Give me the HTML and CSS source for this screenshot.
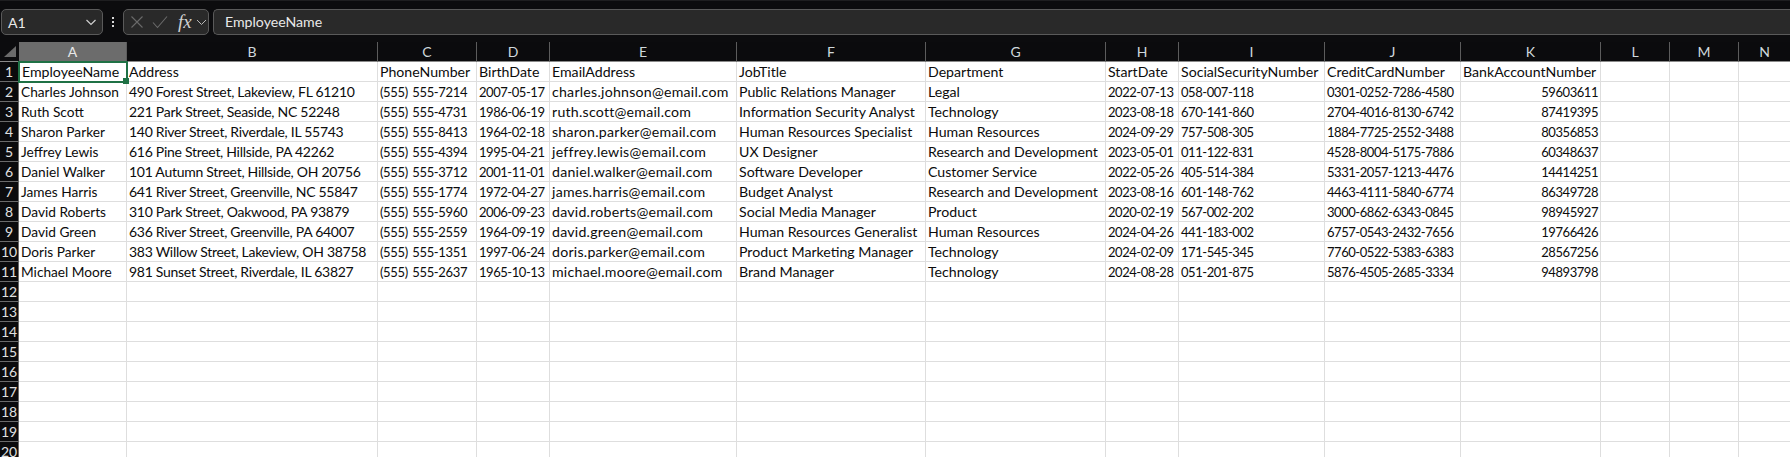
FILE: index.html
```html
<!DOCTYPE html>
<html lang="en">
<head>
<meta charset="utf-8">
<title>Employees</title>
<link rel="stylesheet" href="styles.css">
</head>
<body>
<div class="formula-bar">
  <div class="name-box"><span>A1</span>
    <svg class="chev" width="12" height="12" viewBox="0 0 12 12"><path d="M1.5 4 L6 8.5 L10.5 4" fill="none" stroke="#d0d0d0" stroke-width="1.2"/></svg>
  </div>
  <svg class="dots" width="4" height="12" viewBox="0 0 4 12"><rect x="1" y="1" width="2" height="2" fill="#d8d8d8"/><rect x="1" y="5" width="2" height="2" fill="#d8d8d8"/><rect x="1" y="9" width="2" height="2" fill="#d8d8d8"/></svg>
  <div class="fx-box">
    <svg width="14" height="14" viewBox="0 0 14 14"><path d="M1.5 1.5 L12.5 12.5 M12.5 1.5 L1.5 12.5" stroke="#6a6a6a" stroke-width="1.1" fill="none"/></svg>
    <svg class="check" width="16" height="14" viewBox="0 0 16 14"><path d="M1 7.5 L5.5 12.5 L15 1.5" stroke="#6a6a6a" stroke-width="1.1" fill="none"/></svg>
    <span class="fx">fx</span>
    <svg width="11" height="10" viewBox="0 0 11 10"><path d="M1 3 L5.5 7.5 L10 3" fill="none" stroke="#b8b8b8" stroke-width="1"/></svg>
  </div>
  <div class="formula-input">EmployeeName</div>
</div>
<div class="sheet">
  <div class="corner"><svg width="12" height="11" viewBox="0 0 12 11"><path d="M12 0 V11 H0 Z" fill="#6b6b6b"/></svg></div>
  <div class="ch sel">A</div><div class="ch">B</div><div class="ch">C</div><div class="ch">D</div><div class="ch">E</div><div class="ch">F</div><div class="ch">G</div><div class="ch">H</div><div class="ch">I</div><div class="ch">J</div><div class="ch">K</div><div class="ch">L</div><div class="ch">M</div><div class="ch">N</div>

  <div class="rh">1</div><div class="c active">EmployeeName<i class="handle"></i></div><div class="c">Address</div><div class="c">PhoneNumber</div><div class="c">BirthDate</div><div class="c">EmailAddress</div><div class="c">JobTitle</div><div class="c">Department</div><div class="c">StartDate</div><div class="c">SocialSecurityNumber</div><div class="c">CreditCardNumber</div><div class="c">BankAccountNumber</div><div class="c"></div><div class="c"></div><div class="c"></div>

  <div class="rh">2</div><div class="c">Charles Johnson</div><div class="c">490 Forest Street, Lakeview, FL 61210</div><div class="c">(555) 555-7214</div><div class="c">2007-05-17</div><div class="c">charles.johnson@email.com</div><div class="c">Public Relations Manager</div><div class="c">Legal</div><div class="c">2022-07-13</div><div class="c">058-007-118</div><div class="c">0301-0252-7286-4580</div><div class="c num">59603611</div><div class="c"></div><div class="c"></div><div class="c"></div>

  <div class="rh">3</div><div class="c">Ruth Scott</div><div class="c">221 Park Street, Seaside, NC 52248</div><div class="c">(555) 555-4731</div><div class="c">1986-06-19</div><div class="c">ruth.scott@email.com</div><div class="c">Information Security Analyst</div><div class="c">Technology</div><div class="c">2023-08-18</div><div class="c">670-141-860</div><div class="c">2704-4016-8130-6742</div><div class="c num">87419395</div><div class="c"></div><div class="c"></div><div class="c"></div>

  <div class="rh">4</div><div class="c">Sharon Parker</div><div class="c">140 River Street, Riverdale, IL 55743</div><div class="c">(555) 555-8413</div><div class="c">1964-02-18</div><div class="c">sharon.parker@email.com</div><div class="c">Human Resources Specialist</div><div class="c">Human Resources</div><div class="c">2024-09-29</div><div class="c">757-508-305</div><div class="c">1884-7725-2552-3488</div><div class="c num">80356853</div><div class="c"></div><div class="c"></div><div class="c"></div>

  <div class="rh">5</div><div class="c">Jeffrey Lewis</div><div class="c">616 Pine Street, Hillside, PA 42262</div><div class="c">(555) 555-4394</div><div class="c">1995-04-21</div><div class="c">jeffrey.lewis@email.com</div><div class="c">UX Designer</div><div class="c">Research and Development</div><div class="c">2023-05-01</div><div class="c">011-122-831</div><div class="c">4528-8004-5175-7886</div><div class="c num">60348637</div><div class="c"></div><div class="c"></div><div class="c"></div>

  <div class="rh">6</div><div class="c">Daniel Walker</div><div class="c">101 Autumn Street, Hillside, OH 20756</div><div class="c">(555) 555-3712</div><div class="c">2001-11-01</div><div class="c">daniel.walker@email.com</div><div class="c">Software Developer</div><div class="c">Customer Service</div><div class="c">2022-05-26</div><div class="c">405-514-384</div><div class="c">5331-2057-1213-4476</div><div class="c num">14414251</div><div class="c"></div><div class="c"></div><div class="c"></div>

  <div class="rh">7</div><div class="c">James Harris</div><div class="c">641 River Street, Greenville, NC 55847</div><div class="c">(555) 555-1774</div><div class="c">1972-04-27</div><div class="c">james.harris@email.com</div><div class="c">Budget Analyst</div><div class="c">Research and Development</div><div class="c">2023-08-16</div><div class="c">601-148-762</div><div class="c">4463-4111-5840-6774</div><div class="c num">86349728</div><div class="c"></div><div class="c"></div><div class="c"></div>

  <div class="rh">8</div><div class="c">David Roberts</div><div class="c">310 Park Street, Oakwood, PA 93879</div><div class="c">(555) 555-5960</div><div class="c">2006-09-23</div><div class="c">david.roberts@email.com</div><div class="c">Social Media Manager</div><div class="c">Product</div><div class="c">2020-02-19</div><div class="c">567-002-202</div><div class="c">3000-6862-6343-0845</div><div class="c num">98945927</div><div class="c"></div><div class="c"></div><div class="c"></div>

  <div class="rh">9</div><div class="c">David Green</div><div class="c">636 River Street, Greenville, PA 64007</div><div class="c">(555) 555-2559</div><div class="c">1964-09-19</div><div class="c">david.green@email.com</div><div class="c">Human Resources Generalist</div><div class="c">Human Resources</div><div class="c">2024-04-26</div><div class="c">441-183-002</div><div class="c">6757-0543-2432-7656</div><div class="c num">19766426</div><div class="c"></div><div class="c"></div><div class="c"></div>

  <div class="rh">10</div><div class="c">Doris Parker</div><div class="c">383 Willow Street, Lakeview, OH 38758</div><div class="c">(555) 555-1351</div><div class="c">1997-06-24</div><div class="c">doris.parker@email.com</div><div class="c">Product Marketing Manager</div><div class="c">Technology</div><div class="c">2024-02-09</div><div class="c">171-545-345</div><div class="c">7760-0522-5383-6383</div><div class="c num">28567256</div><div class="c"></div><div class="c"></div><div class="c"></div>

  <div class="rh">11</div><div class="c">Michael Moore</div><div class="c">981 Sunset Street, Riverdale, IL 63827</div><div class="c">(555) 555-2637</div><div class="c">1965-10-13</div><div class="c">michael.moore@email.com</div><div class="c">Brand Manager</div><div class="c">Technology</div><div class="c">2024-08-28</div><div class="c">051-201-875</div><div class="c">5876-4505-2685-3334</div><div class="c num">94893798</div><div class="c"></div><div class="c"></div><div class="c"></div>

  <div class="rh">12</div><div class="c"></div><div class="c"></div><div class="c"></div><div class="c"></div><div class="c"></div><div class="c"></div><div class="c"></div><div class="c"></div><div class="c"></div><div class="c"></div><div class="c"></div><div class="c"></div><div class="c"></div><div class="c"></div>
  <div class="rh">13</div><div class="c"></div><div class="c"></div><div class="c"></div><div class="c"></div><div class="c"></div><div class="c"></div><div class="c"></div><div class="c"></div><div class="c"></div><div class="c"></div><div class="c"></div><div class="c"></div><div class="c"></div><div class="c"></div>
  <div class="rh">14</div><div class="c"></div><div class="c"></div><div class="c"></div><div class="c"></div><div class="c"></div><div class="c"></div><div class="c"></div><div class="c"></div><div class="c"></div><div class="c"></div><div class="c"></div><div class="c"></div><div class="c"></div><div class="c"></div>
  <div class="rh">15</div><div class="c"></div><div class="c"></div><div class="c"></div><div class="c"></div><div class="c"></div><div class="c"></div><div class="c"></div><div class="c"></div><div class="c"></div><div class="c"></div><div class="c"></div><div class="c"></div><div class="c"></div><div class="c"></div>
  <div class="rh">16</div><div class="c"></div><div class="c"></div><div class="c"></div><div class="c"></div><div class="c"></div><div class="c"></div><div class="c"></div><div class="c"></div><div class="c"></div><div class="c"></div><div class="c"></div><div class="c"></div><div class="c"></div><div class="c"></div>
  <div class="rh">17</div><div class="c"></div><div class="c"></div><div class="c"></div><div class="c"></div><div class="c"></div><div class="c"></div><div class="c"></div><div class="c"></div><div class="c"></div><div class="c"></div><div class="c"></div><div class="c"></div><div class="c"></div><div class="c"></div>
  <div class="rh">18</div><div class="c"></div><div class="c"></div><div class="c"></div><div class="c"></div><div class="c"></div><div class="c"></div><div class="c"></div><div class="c"></div><div class="c"></div><div class="c"></div><div class="c"></div><div class="c"></div><div class="c"></div><div class="c"></div>
  <div class="rh">19</div><div class="c"></div><div class="c"></div><div class="c"></div><div class="c"></div><div class="c"></div><div class="c"></div><div class="c"></div><div class="c"></div><div class="c"></div><div class="c"></div><div class="c"></div><div class="c"></div><div class="c"></div><div class="c"></div>
  <div class="rh">20</div><div class="c"></div><div class="c"></div><div class="c"></div><div class="c"></div><div class="c"></div><div class="c"></div><div class="c"></div><div class="c"></div><div class="c"></div><div class="c"></div><div class="c"></div><div class="c"></div><div class="c"></div><div class="c"></div>
</div>
</body>
</html>
```
FILE: styles.css
```css
* { box-sizing: border-box; }
html, body { margin: 0; padding: 0; height: 100%; overflow: hidden; background: #fff; }
body { font-family: "Lato", "Liberation Sans", sans-serif; font-size: 14.15px; color: #111; }

.formula-bar {
  height: 42px;
  background: #0c0c0e;
  border-top: 1px solid #1e1e20;
  display: flex;
  align-items: flex-start;
  padding: 8px 0 0 1px;
}
.name-box {
  width: 102px; height: 26px;
  background: #292929;
  border: 1px solid #5a5a5a;
  border-radius: 5px;
  color: #e8e8e8;
  display: flex; align-items: center; justify-content: space-between;
  padding: 0 5px 0 6px;
}
.dots { margin: 7px 8px 0 8px; }
.fx-box {
  width: 86px; height: 26px;
  background: #292929;
  border: 1px solid #5a5a5a;
  border-radius: 5px;
  display: flex; align-items: center;
  padding: 0 0 0 6px;
}
.check { margin-left: 8px; }
.fx { font-family: "Liberation Serif", serif; font-style: italic; font-size: 19px; line-height: 20px; color: #d0d0d0; margin-left: 10px; margin-right: 4px; }
.formula-input {
  flex: 1;
  height: 26px;
  margin-left: 4px;
  background: #292929;
  border: 1px solid #5a5a5a;
  border-right: 0;
  border-radius: 5px 0 0 5px;
  color: #e8e8e8;
  line-height: 24px;
  padding-left: 11px;
}

.sheet {
  display: grid;
  grid-template-columns: 19px 108px 251px 99px 73px 187px 189px 180px 73px 146px 136px 140px 69px 69px 52px;
  grid-auto-rows: 20px;
}
.corner { background: #0c0c0e; display: flex; align-items: flex-end; justify-content: flex-end; padding: 0 3px 4px 0; border-bottom: 1px solid #8a8a8a; }
.ch {
  background: #0b0b0d; color: #cfd8dc;
  border-right: 1px solid #5c5c5c;
  border-bottom: 1px solid #8a8a8a;
  display: flex; align-items: center; justify-content: center;
  font-size: 14px;
}
.ch.sel { background: #6c6c6c; color: #e8e8e8; }
.rh {
  background: #0b0b0d; color: #e0e0e0;
  border-bottom: 1px solid #6a6a6a;
  border-right: 1px solid #6a6a6a;
  display: flex; align-items: center; justify-content: center;
  font-size: 14px;
  overflow: hidden;
}
.c {
  background: #fff;
  border-right: 1px solid #dedede;
  border-bottom: 1px solid #dedede;
  padding: 0 2px;
  white-space: nowrap;
  line-height: 20px;
  color: #0c0c0c;
  position: relative;
}
/* Data rows start at child 31: tune each column to Calibri's spacing */
.c:nth-child(15n+2):nth-child(n+31) { font-size: 13.7px; }
.c:nth-child(15n+3):nth-child(n+31) { font-size: 14px; letter-spacing: -0.28px; }
.c:nth-child(15n+4):nth-child(n+31) { font-size: 13px; letter-spacing: -0.35px; word-spacing: 1.5px; }
.c:nth-child(15n+5):nth-child(n+31),
.c:nth-child(15n+9):nth-child(n+31),
.c:nth-child(15n+10):nth-child(n+31),
.c:nth-child(15n+11):nth-child(n+31),
.c:nth-child(15n+12):nth-child(n+31) { font-size: 13px; letter-spacing: -0.45px; }
.c:nth-child(15n+6):nth-child(n+31) { letter-spacing: 0.24px; }
.num { text-align: right; }
.active { outline: 2px solid #1f7145; outline-offset: -1px; z-index: 2; padding-left: 3px; }
.handle {
  position: absolute; right: -3px; bottom: -3px;
  width: 6px; height: 6px;
  background: #1f7145;
}
```
